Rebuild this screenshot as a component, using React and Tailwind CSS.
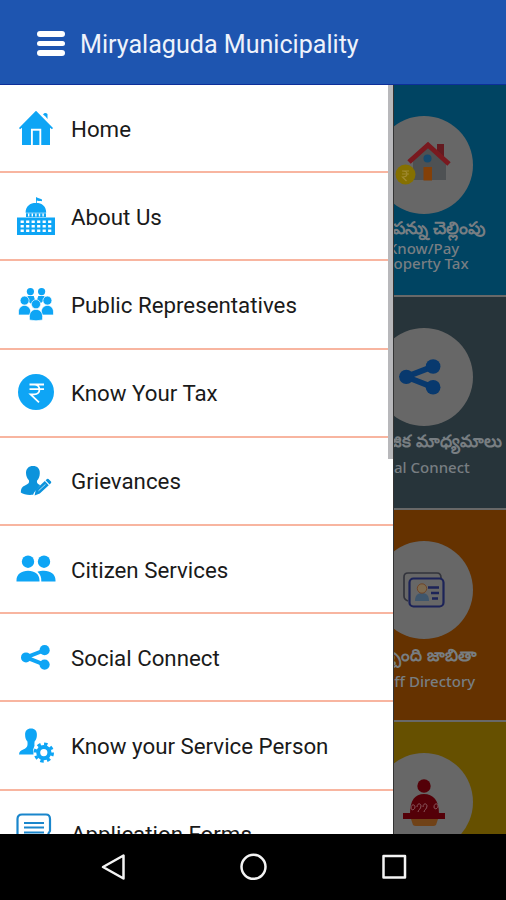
import React from "react";

const HomeIcon = () => (
    <svg width="36" height="36" viewBox="0 0 36 36" fill="#0ea5f5">
        <path d="M18 .8 35 18l-1 1.2-2-1.4V35H22.6V19.5h-9V35H4V17.8l-2 1.400L1 18z"/>
        <path d="M25 4.500q2-2.500 4.500-.5v5L27.500 6.500z"/>
        <path d="M14.800 20.700h6.600V35h-6.600z"/>
        <path d="M13.600 35V19.400h9V35" fill="none" stroke="#fff" strokeWidth="1.300"/>
    </svg>
);

const CapitolIcon = () => (
    <svg width="38" height="38" viewBox="0 0 38 38" fill="#0ea5f5">
        <path d="M19 0c2 1.600 3.600.8 6 2.600v1.600c-2-.6-3.600.2-5.200-.6V6H19zM8.600 15.700C8.600 9.500 13 5.700 19 5.700s10.200 3.800 10.200 10z"/>
        <path d="M9 16.200h20V20H9zM0 20.400h38V38H0z"/>
        <path d="M11 18h17" stroke="#fff" strokeWidth="3" strokeDasharray="1.400 2.200"/>
        <path d="M3.600 24.800h31M3.600 29.300h31M3.600 33.800h31" stroke="#fff" strokeWidth="2.500" strokeDasharray="3.200 2.300"/>
    </svg>
);

const PeopleIcon = () => (
    <svg width="36" height="34" viewBox="0 0 36 34" fill="#0ea5f5">
        <circle cx="12.400" cy="4.600" r="3.600"/>
        <circle cx="23.600" cy="4.600" r="3.600"/>
        <path d="M9.500 9h6.200l2 6-3.200 3-4.800-4zM20.300 9h6.200l-1.200 5-4.800 4-2.200-3z"/>
        <g stroke="#fff" strokeWidth=".7">
            <circle cx="6.600" cy="13.600" r="4.500"/>
            <circle cx="29.400" cy="13.600" r="4.500"/>
            <path d="M.5 28v-3c0-4 2.600-6.600 6-6.600s6.200 2.600 6.200 6.600v3zM23.300 28v-3c0-4 2.600-6.600 6.100-6.600s6.100 2.600 6.100 6.600v3z"/>
            <circle cx="18" cy="17.200" r="4.600"/>
            <path d="M11.400 33v-3.400c0-4.600 2.800-7.200 6.600-7.200s6.600 2.600 6.600 7.200V33q-6.600 1.600-13.200 0z"/>
        </g>
    </svg>
);

const RupeeIcon = () => (
    <svg width="36" height="37" viewBox="0 0 36 37">
        <circle cx="18" cy="18" r="18" fill="#0ea5f5"/>
        <path d="M11.500 10.500H26M11.500 15.200H26M12 10.500h4.200c7 0 7 9.800 0 9.800H12.600l8.400 8" fill="none" stroke="#fff" strokeWidth="1.800"/>
    </svg>
);

const PersonEditIcon = () => (
    <svg width="32" height="32" viewBox="0 0 32 32" fill="#0c93dc">
        <path d="M13 1c4.400 0 7 2.700 6.800 7.200 0 3.200-1.200 5.700-2.700 7.300-.6 1.900.2 3.200 2.400 4.300l.6.400-6 7.200-1 2.400C8 30.300 3.400 29.600.8 27.500c0-4 1.200-6 4.200-7.100 3.500-1.300 4.600-2.700 3.900-5.100C7.400 13.700 6 11 6 8c0-4.300 2.600-7 7-7z"/>
        <path d="m15.800 24.400 9-8.400 4 4.200-9 8.400-5.200 2zM25.600 15.200l1.400-1.200q.8-.6 1.500 0l2.500 2.600q.6.700 0 1.500L29.600 19.400z"/>
        <path d="m18.500 25.800 7-6.500" stroke="#fff" strokeWidth=".7"/>
    </svg>
);

const UsersIcon = () => (
    <svg width="40" height="28" viewBox="0 0 40 28" fill="#0ea5f5">
        <circle cx="12" cy="6.700" r="6.200"/>
        <circle cx="28" cy="6.700" r="6.200"/>
        <path d="M.5 26.500v-1.300c0-6 5-9.400 11.600-9.400s11.400 3.400 11.400 9.400v1.300zM21.500 16.800c2-.8 4.200-1 6.500-1 6.500 0 11.500 3.400 11.500 9.400v1.300H25.300c.2-4.200-1-7.300-3.800-9.700z"/>
    </svg>
);

const ShareIcon = ({className = "w-[29px] h-[25px] text-[#0ea5f5]"}) => (
    <svg className={className} viewBox="0 0 29 25" fill="currentColor">
        <path d="M24 5 5 12.400l19 7.400" fill="none" stroke="currentColor" strokeWidth="4"/>
        <circle cx="5" cy="12.400" r="5"/>
        <circle cx="23.600" cy="5.200" r="5.100"/>
        <circle cx="23.600" cy="19.600" r="5.100"/>
    </svg>
);

const PersonGearIcon = () => (
    <svg width="36" height="36" viewBox="0 0 36 36" fill="#0ea5f5">
        <path d="M13 1.500c4 0 6 2.400 5.900 6.200 0 3-.9 5.400-2.300 6.900-.3 2.200-.1 3-.1 4.200l-1.300 3.800.3 4.900H1c.3-3 1.500-4 4.700-5.200 3.400-1.400 4.300-3.500 3.700-7.700C8 13 7.100 10.800 7.100 7.700 7 3.900 9 1.500 13 1.500z"/>
        <circle cx="25.800" cy="25.600" r="8.600" fill="none" stroke="#0ea5f5" strokeWidth="3.200" strokeDasharray="3.400 3.354"/>
        <circle cx="25.800" cy="25.600" r="5.600" fill="#fff" stroke="#0ea5f5" strokeWidth="4"/>
    </svg>
);

const FormIcon = () => (
    <svg className="relative -left-[1.500px] -top-[1px]" width="36" height="40" viewBox="0 0 36 40" fill="none" stroke="#1a86cc" strokeWidth="2.200">
        <path d="M1.500 39V6Q1.500 1.500 6 1.500h24Q34 1.500 34 6v12l-2 3"/>
        <path d="M8 10h20M8 14.500h20M8 19.500h20M8 25h12"/>
    </svg>
);

const menu = [
    {label: "Home", icon: <HomeIcon/>},
    {label: "About Us", icon: <CapitolIcon/>},
    {label: "Public Representatives", icon: <PeopleIcon/>},
    {label: "Know Your Tax", icon: <RupeeIcon/>},
    {label: "Grievances", icon: <PersonEditIcon/>},
    {label: "Citizen Services", icon: <UsersIcon/>},
    {label: "Social Connect", icon: <ShareIcon/>},
    {label: "Know your Service Person", icon: <PersonGearIcon/>},
    {label: "Application Forms", icon: <FormIcon/>},
];

const HouseArt = () => (
    <svg width="58" height="50" viewBox="0 0 58 50">
        <path d="M42 4h7v16l-7-6z" fill="#641a20"/>
        <path d="M18 21 33 7l18 15v18H18z" fill="#4e5153"/>
        <path d="m14 22 19-17 21 19" fill="none" stroke="#79191f" strokeWidth="5"/>
        <circle cx="32.500" cy="18.500" r="4" fill="#174b6e"/>
        <path d="M28.500 27h8.500v13.500h-8.500z" fill="#834008"/>
        <circle cx="10.500" cy="34.500" r="10" fill="#857000"/>
        <path d="M7 31h7M7 34h7M7.500 31c6 0 6 6 0 6l4 4" fill="none" stroke="#a08a30" strokeWidth="1.200"/>
    </svg>
);

const CardArt = () => (
    <svg width="42" height="36" viewBox="0 0 42 36" fill="none">
        <path d="M5 29c-3-1-4-2-4-5V5q0-4 4-4h29q4 0 4 5" stroke="#33343c" strokeWidth="1.700"/>
        <rect x="6.500" y="6.500" width="34" height="28" rx="4" stroke="#1c2358" strokeWidth="2.200"/>
        <path d="M12 29c0-6 3-8 7-8s7 2 7 8z" fill="#3f566c"/>
        <circle cx="19" cy="16.500" r="4.700" fill="#7c6a50" stroke="#704628"/>
        <path d="M25 15.500h11M28 21h8M29 26.500h6" stroke="#1c2358" strokeWidth="2.700"/>
    </svg>
);

const DeskArt = () => (
    <svg width="44" height="48" viewBox="0 0 44 48">
        <circle cx="22" cy="8" r="6.700" fill="#540008"/>
        <path d="M8 36c0-14 5-20 14-20s15 6 15 20z" fill="#540008"/>
        <path d="M9 41h27l-2 6q-1 1-3 1H14q-2 0-3-1z" fill="#704217"/>
        <path d="M1 35h42v6H1z" fill="#540008"/>
        <path d="M9 30c0-4 4-4 4-1s-4 4-4 1m6-1c0-4 4-4 4-1s-3 4-3 6m5-5c0-4 4-4 4-1s-3 4-3 6m10-5c0-4 4-4 4-1s-4 4-4 1" fill="none" stroke="#8b5a60" strokeWidth="1"/>
    </svg>
);

function Tile({className, art, children}) {
    return (
        <div className={`flex flex-col items-center border-b-2 border-[#686868] pt-[31px] h-[212.300px] shrink-0 text-[#787e82] ${className}`}>
            <div className="w-[98px] h-[98px] rounded-full bg-[#676767] flex items-center justify-center shrink-0">{art}</div>
            {children}
        </div>
    );
}

export default function App() {
    return (
        <div className="w-[506px] h-[900px] flex flex-col overflow-hidden bg-black font-['Roboto',sans-serif]">
            <header className="h-[85px] shrink-0 bg-[#1e55b0] border-b border-[#0d2f99] flex items-center pl-[37px] pt-[3px] gap-[15px]">
                <div className="flex flex-col gap-1">
                    <span className="w-7 h-[5.500px] rounded-sm bg-white"/>
                    <span className="w-7 h-[5.500px] rounded-sm bg-white"/>
                    <span className="w-7 h-[5.500px] rounded-sm bg-white"/>
                </div>
                <h1 className="text-[25.100px] pt-[3px] text-[#eef2fb] whitespace-nowrap">Miryalaguda Municipality</h1>
            </header>

            <main className="relative h-[749px] shrink-0 overflow-hidden bg-[#27343a]">
                {/* dimmed tiles behind the drawer */}
                <div className="ml-auto w-[165px] flex flex-col font-['Noto_Sans',sans-serif] font-medium whitespace-nowrap">
                    <Tile className="bg-[#004462]" art={<HouseArt/>}>
                        <p className="text-[17.500px] leading-[27px] font-bold">ఆస్తి పన్ను చెల్లింపు</p>
                        <p className="text-[15px] leading-[14.500px]">Know/Pay</p>
                        <p className="text-[15px] leading-[14.500px]">Property Tax</p>
                    </Tile>
                    <Tile className="bg-[#27343a]" art={<ShareIcon className="w-[42px] h-[36px] mr-2 text-[#08396e]"/>}>
                        <p className="text-[17.200px] leading-[29px] font-bold ml-[3px]">సామాజిక మాధ్యమాలు</p>
                        <p className="text-[15px] leading-[24px] mr-[12px]">Social Connect</p>
                    </Tile>
                    <Tile className="bg-[#653200]" art={<CardArt/>}>
                        <p className="text-[17px] leading-[31px] font-bold">సిబ్బంది జాబితా</p>
                        <p className="text-[15px] leading-[22px]">Staff Directory</p>
                    </Tile>
                    <Tile className="bg-[#665000]" art={<DeskArt/>}/>
                </div>

                {/* drawer */}
                <nav className="absolute inset-y-0 left-0 w-[394px] bg-white overflow-hidden border-r border-[#333]">
                    <ul>
                        {menu.map((item) => (
                            <li key={item.label} className="h-[88.200px] flex items-center border-b-2 border-[#f8b5a0]">
                                <span className="w-[71px] flex justify-center shrink-0">{item.icon}</span>
                                <span className="text-[22.300px] pt-[2.500px] text-[#1a1a1a] whitespace-nowrap">{item.label}</span>
                            </li>
                        ))}
                    </ul>
                    {/* scroll thumb */}
                    <div className="absolute top-0 right-0 w-[5px] h-[374px] bg-[#b8b8bb]"/>
                </nav>
            </main>

            <footer className="flex-1 bg-black">
                <svg width="506" height="66" viewBox="0 0 506 66" fill="none" stroke="#f4f4f4" strokeWidth="2.500" strokeLinejoin="round">
                    <path d="M123.500 21.500v23L103 33z"/>
                    <circle cx="253.500" cy="32.800" r="12"/>
                    <path d="M383.500 22h21.500v21.500h-21.500z"/>
                </svg>
            </footer>
        </div>
    );
}
